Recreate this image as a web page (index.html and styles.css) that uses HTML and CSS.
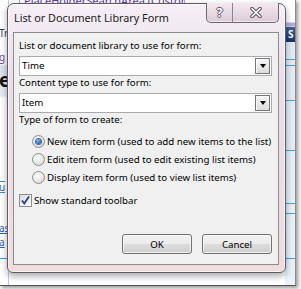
FILE: index.html
```html
<!DOCTYPE html>
<html lang="en">
<head>
  <meta charset="UTF-8">
  <meta name="viewport" content="width=device-width, initial-scale=1">
  <title>List or Document Library Form</title>
  <link rel="stylesheet" href="styles.css">
</head>
<body>
  <div class="screen">
    <!-- page showing behind the dialog -->
    <div class="bg-top"><span class="bg-top-text">PlaceHolderSearchArea (Custom)</span></div>
    <div class="bg-left">
      <span class="bg-tr">Tr</span>
      <span class="bg-g">g</span>
      <span class="bg-e">e</span>
      <span class="bg-u">u</span>
      <span class="bg-as">as</span>
      <span class="bg-a">a</span>
      <span class="bg-line"></span>
    </div>
    <div class="bg-right">
      <span class="bg-head">S</span>
      <span class="bg-rline l1"></span>
      <span class="bg-rline l2"></span>
      <span class="bg-rline l3"></span>
      <span class="bg-rline l4"></span>
      <span class="bg-rline l5"></span>
      <span class="bg-rline l6"></span>
      <span class="bg-rline l7"></span>
    </div>

    <div class="dialog">
      <div class="titlebar">
        <span class="title">List or Document Library Form</span>
        <div class="caption-btns">
          <span class="cap-help">?</span>
          <span class="cap-close">
            <svg width="12" height="11" viewBox="0 0 12 11">
              <path d="M2 1.5 L10 9.5 M10 1.5 L2 9.5" stroke="#5a5560" stroke-width="3.6" stroke-linecap="round"/>
              <path d="M2 1.5 L10 9.5 M10 1.5 L2 9.5" stroke="#ffffff" stroke-width="1.6" stroke-linecap="round"/>
            </svg>
          </span>
        </div>
      </div>

      <div class="client">
        <div class="field-label">List or document library to use for form:</div>
        <div class="combo">
          <span class="combo-text">Time</span>
          <span class="combo-drop"></span>
        </div>

        <div class="field-label">Content type to use for form:</div>
        <div class="combo">
          <span class="combo-text">Item</span>
          <span class="combo-drop"></span>
        </div>

        <div class="field-label">Type of form to create:</div>
        <div class="radio-group">
          <div class="radio-row"><span class="radio checked"></span>New item form (used to add new items to the list)</div>
          <div class="radio-row"><span class="radio"></span>Edit item form (used to edit existing list items)</div>
          <div class="radio-row"><span class="radio"></span>Display item form (used to view list items)</div>
        </div>

        <div class="check-row">
          <span class="checkbox">
            <svg width="11" height="11" viewBox="0 0 11 11">
              <path d="M2 5.5 L4.3 8.5 L9 1.5" fill="none" stroke="#25408f" stroke-width="1.8"/>
            </svg>
          </span>
          Show standard toolbar
        </div>

        <div class="button-row">
          <button class="btn">OK</button>
          <button class="btn">Cancel</button>
        </div>
      </div>
    </div>
  </div>
</body>
</html>
```

FILE: styles.css
```css
body {
  margin: 0;
  width: 301px;
  height: 289px;
  overflow: hidden;
  background-color: #f4f4f4;
  font-family: "Noto Sans", "Open Sans", sans-serif;
}
.screen {
  position: relative;
  width: 295px;
  height: 285px;
  background-color: #ffffff;
  border-right: 1px solid #8a8a8a;
  border-bottom: 1px solid #555;
  box-shadow: 2px 2px 3px rgba(0,0,0,0.35);
  overflow: hidden;
}
/* Background page */
.bg-top {
  position: absolute;
  left: 19px;
  top: -5px;
  width: 164px;
  height: 8px;
  border: 1px solid #aaa4e0;
  font-size: 11px;
  line-height: 9px;
  color: #5b3a9e;
  overflow: hidden;
}
.bg-top-text {
  padding-left: 4px;
  white-space: nowrap;
}
.bg-left {
  position: absolute;
  left: 0;
  top: 0;
  width: 8px;
  height: 285px;
  background: linear-gradient(#ffffff 0, #ffffff 64px, #dbe1ec 66px, #e6ebf3 96px, #ffffff 98px);
  border-right: 1px solid #c9c4ea;
  overflow: hidden;
}
.bg-left span {
  position: absolute;
  left: -1px;
  font-size: 10px;
  line-height: 10px;
}
.bg-tr { top: 28px; color: #2f3f5f; }
.bg-g { top: 52px; color: #6a3fa6; text-decoration: underline; }
.bg-e { top: 71px; font-size: 19px !important; line-height: 19px !important; font-weight: bold; color: #111; }
.bg-u { top: 181px; color: #2b5fc0; border-top: 1px solid #2f8ee0; border-bottom: 1px solid #2f8ee0; }
.bg-as { top: 223px; color: #2b5fc0; text-decoration: underline; }
.bg-a { top: 237px; color: #2b5fc0; text-decoration: underline; }
.bg-line { top: 258px; width: 8px; height: 1px; background-color: #3fa2e6; }

.bg-right {
  position: absolute;
  left: 285px;
  top: 0;
  width: 10px;
  height: 285px;
  background: linear-gradient(#ffffff 0, #ffffff 22px, #b8a8e0 23px, #b8a8e0 26px, #e1eaf6 27px, #eaf1fa);
  border-right: 1px solid #9a9a9a;
}
.bg-head {
  position: absolute;
  left: 0;
  top: 27px;
  width: 10px;
  height: 15px;
  padding-left: 3px;
  box-sizing: border-box;
  background: linear-gradient(#3e5f98, #16346e);
  color: #fff;
  font-size: 10px;
  font-weight: bold;
  line-height: 15px;
}
.bg-rline {
  position: absolute;
  left: 0;
  width: 10px;
  height: 1px;
  background-color: #3fa2e6;
}
.l1 { top: 59px; }
.l2 { top: 65px; }
.l3 { top: 100px; }
.l4 { top: 150px; }
.l5 { top: 203px; }
.l6 { top: 213px; }
.l7 { top: 258px; }

/* Dialog window */
.dialog {
  position: absolute;
  left: 7px;
  top: 3px;
  width: 279px;
  height: 270px;
  box-sizing: border-box;
  border: 1px solid #5e5a66;
  border-radius: 7px 7px 6px 6px;
  background: linear-gradient(#f6eff5 0%, #e9dce8 30%, #ecdde3 70%, #f0dcdc 100%);
  box-shadow: inset 0 0 0 1px rgba(255,255,255,0.7), 0 3px 7px rgba(0,0,0,0.35);
  display: flex;
  flex-direction: column;
}
.titlebar {
  height: 28px;
  display: flex;
  align-items: flex-start;
}
.title {
  flex: 1;
  padding-left: 6px;
  font-size: 10.8px;
  line-height: 28px;
  color: #1b1b1b;
}
.caption-btns {
  display: flex;
  height: 19px;
  margin-top: -1px;
  margin-right: 6px;
  border: 1px solid #6f6470;
  border-top: none;
  border-radius: 0 0 5px 5px;
  background: linear-gradient(#f3e9f0, #dccbd7);
  box-shadow: inset 0 -1px 0 rgba(255,255,255,0.6);
}
.cap-help {
  width: 25px;
  text-align: center;
  font-size: 12px;
  font-weight: bold;
  line-height: 19px;
  color: #fff;
  text-shadow: 1px 0 #5a5560, -1px 0 #5a5560, 0 1px #5a5560, 0 -1px #5a5560;
  border-right: 1px solid #8d8190;
}
.cap-close {
  width: 45px;
  display: flex;
  align-items: center;
  justify-content: center;
}
.client {
  flex: 1;
  margin: 0 6px 7px 5px;
  padding: 6px 6px 10px 5px;
  border: 1px solid #8c8c8c;
  background-color: #f0f0f0;
  display: flex;
  flex-direction: column;
  font-size: 9.7px;
  color: #000;
  white-space: nowrap;
}
.field-label {
  line-height: 14px;
  margin-bottom: 3px;
}
.combo {
  height: 20px;
  box-sizing: border-box;
  border: 1px solid #a9abb1;
  padding: 1px;
  background-color: #fff;
  display: flex;
}
.combo-text {
  flex: 1;
  padding-left: 1px;
  line-height: 16px;
}
.combo-drop {
  width: 15px;
  height: 16px;
  box-sizing: border-box;
  border: 1px solid #767676;
  background: linear-gradient(#f6f6f6, #dcdcdc);
  box-shadow: inset 1px 1px 0 #fff;
  display: flex;
  align-items: center;
  justify-content: center;
}
.combo-drop::after {
  content: "";
  border-left: 3.5px solid transparent;
  border-right: 3.5px solid transparent;
  border-top: 4px solid #000;
}
.radio-group {
  margin-top: 2px;
  padding-left: 13px;
}
.radio-row {
  height: 18px;
  display: flex;
  align-items: center;
}
.radio {
  flex: none;
  width: 13px;
  height: 13px;
  box-sizing: border-box;
  margin-right: 2px;
  border: 1px solid #8e8f8f;
  border-radius: 50%;
  background: radial-gradient(circle at 40% 35%, #ffffff 0%, #e8e8e8 50%, #cfcfcf 100%);
  display: flex;
  align-items: center;
  justify-content: center;
}
.radio.checked::after {
  content: "";
  width: 5px;
  height: 5px;
  border-radius: 50%;
  background: radial-gradient(circle at 40% 35%, #8fc0f4, #1f5db0 70%);
  box-shadow: 0 0 0 1px #496a95;
}
.check-row {
  margin-top: 6px;
  height: 16px;
  display: flex;
  align-items: center;
}
.checkbox {
  flex: none;
  width: 13px;
  height: 13px;
  box-sizing: border-box;
  margin-right: 2px;
  border: 1px solid #8e8f8f;
  background: linear-gradient(135deg, #dcdcdc, #fbfbfb);
  display: flex;
  align-items: center;
  justify-content: center;
}
.button-row {
  margin-top: auto;
  display: flex;
  justify-content: flex-end;
  gap: 10px;
}
.btn {
  width: 70px;
  height: 20px;
  padding: 0;
  border: 1px solid #707070;
  border-radius: 3px;
  background: linear-gradient(#f2f2f2 0%, #ebebeb 50%, #dddddd 51%, #cfcfcf 100%);
  box-shadow: inset 0 0 0 1px rgba(255,255,255,0.7);
  font-family: "Noto Sans", "Open Sans", sans-serif;
  font-size: 9.7px;
  color: #000;
}
```
